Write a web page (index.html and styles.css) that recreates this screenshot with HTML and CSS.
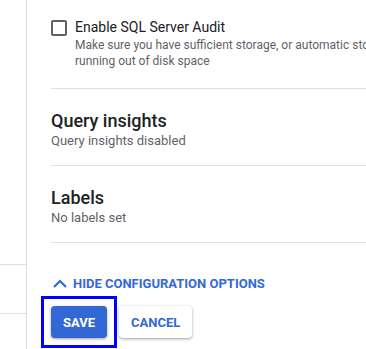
FILE: index.html
```html
<!DOCTYPE html>
<html lang="en">
<head>
  <meta charset="UTF-8">
  <meta name="viewport" content="width=device-width, initial-scale=1.0">
  <title>Configuration options</title>
  <link rel="stylesheet" href="styles.css">
</head>
<body>
  <div class="page">
    <div class="sidebar">
      <div class="side-row first"></div>
      <div class="side-row"></div>
    </div>

    <div class="main">
      <div class="check-row">
        <span class="checkbox"></span>
        <div class="check-text">
          <div class="check-label">Enable SQL Server Audit</div>
          <div class="check-desc">Make sure you have sufficient storage, or automatic storage increases enabled, to avoid<br>running out of disk space</div>
        </div>
      </div>

      <div class="section">
        <h2>Query insights</h2>
        <div class="section-desc">Query insights disabled</div>
      </div>

      <div class="section">
        <h2>Labels</h2>
        <div class="section-desc">No labels set</div>
      </div>

      <div class="toggle-link">
        <svg width="16" height="10" viewBox="0 0 16 10">
          <polyline points="2,9 8,3 14,9" fill="none" stroke="#3367d6" stroke-width="2.2"/>
        </svg>
        <span>Hide configuration options</span>
      </div>

      <div class="actions">
        <div class="focus-ring">
          <button class="btn btn-primary">Save</button>
        </div>
        <button class="btn btn-secondary">Cancel</button>
      </div>
    </div>
  </div>
</body>
</html>
```

FILE: styles.css
```css
html, body {
  margin: 0;
  height: 100%;
  overflow: hidden;
  background-color: white;
}
body {
  font-family: Roboto, "Liberation Sans", Arial, sans-serif;
  color: #202124;
}
.page {
  display: flex;
  height: 100%;
}
.sidebar {
  width: 26px;
  flex-shrink: 0;
  border-right: 1px solid #e0e0e0;
}
.side-row {
  height: 48px;
  border-bottom: 1px solid #e0e0e0;
}
.side-row.first {
  height: 264px;
}
.main {
  padding-left: 24px;
  width: 520px;
  flex-shrink: 0;
}
.check-row {
  display: flex;
  gap: 8px;
  padding: 17px 0 19px;
  border-bottom: 1px solid #e0e0e0;
}
.checkbox {
  width: 12px;
  height: 12px;
  margin-top: 3px;
  border: 2px solid #5f6368;
  border-radius: 2px;
  flex-shrink: 0;
}
.check-label {
  font-size: 14px;
  line-height: 20px;
}
.check-desc {
  font-size: 12px;
  line-height: 16px;
  color: #5f6368;
  white-space: nowrap;
}
.section {
  padding: 20px 0 16px;
  border-bottom: 1px solid #e0e0e0;
}
.section h2 {
  margin: 0;
  font-size: 18px;
  font-weight: 500;
  line-height: 24px;
}
.section-desc {
  font-size: 13px;
  line-height: 16px;
  color: #5f6368;
}
.toggle-link {
  display: flex;
  align-items: center;
  gap: 5px;
  margin-top: 30px;
  margin-left: 1px;
  height: 20px;
  color: #3367d6;
  font-size: 13px;
  font-weight: 700;
  text-transform: uppercase;
}
.actions {
  display: flex;
  gap: 12px;
  margin-top: 13px;
}
.focus-ring {
  margin: -10px -10px -10px -10px;
  padding: 7px;
  border: 3px solid #0000ff;
  display: flex;
}
.btn {
  height: 32px;
  padding: 0 12px;
  border: none;
  border-radius: 4px;
  font-family: inherit;
  font-size: 13px;
  font-weight: 700;
  text-transform: uppercase;
  cursor: pointer;
  box-shadow: 0 1px 2px rgba(60, 64, 67, 0.3), 0 1px 3px 1px rgba(60, 64, 67, 0.15);
}
.btn-primary {
  background-color: #3367d6;
  color: white;
}
.btn-secondary {
  background-color: white;
  color: #3367d6;
}
```
